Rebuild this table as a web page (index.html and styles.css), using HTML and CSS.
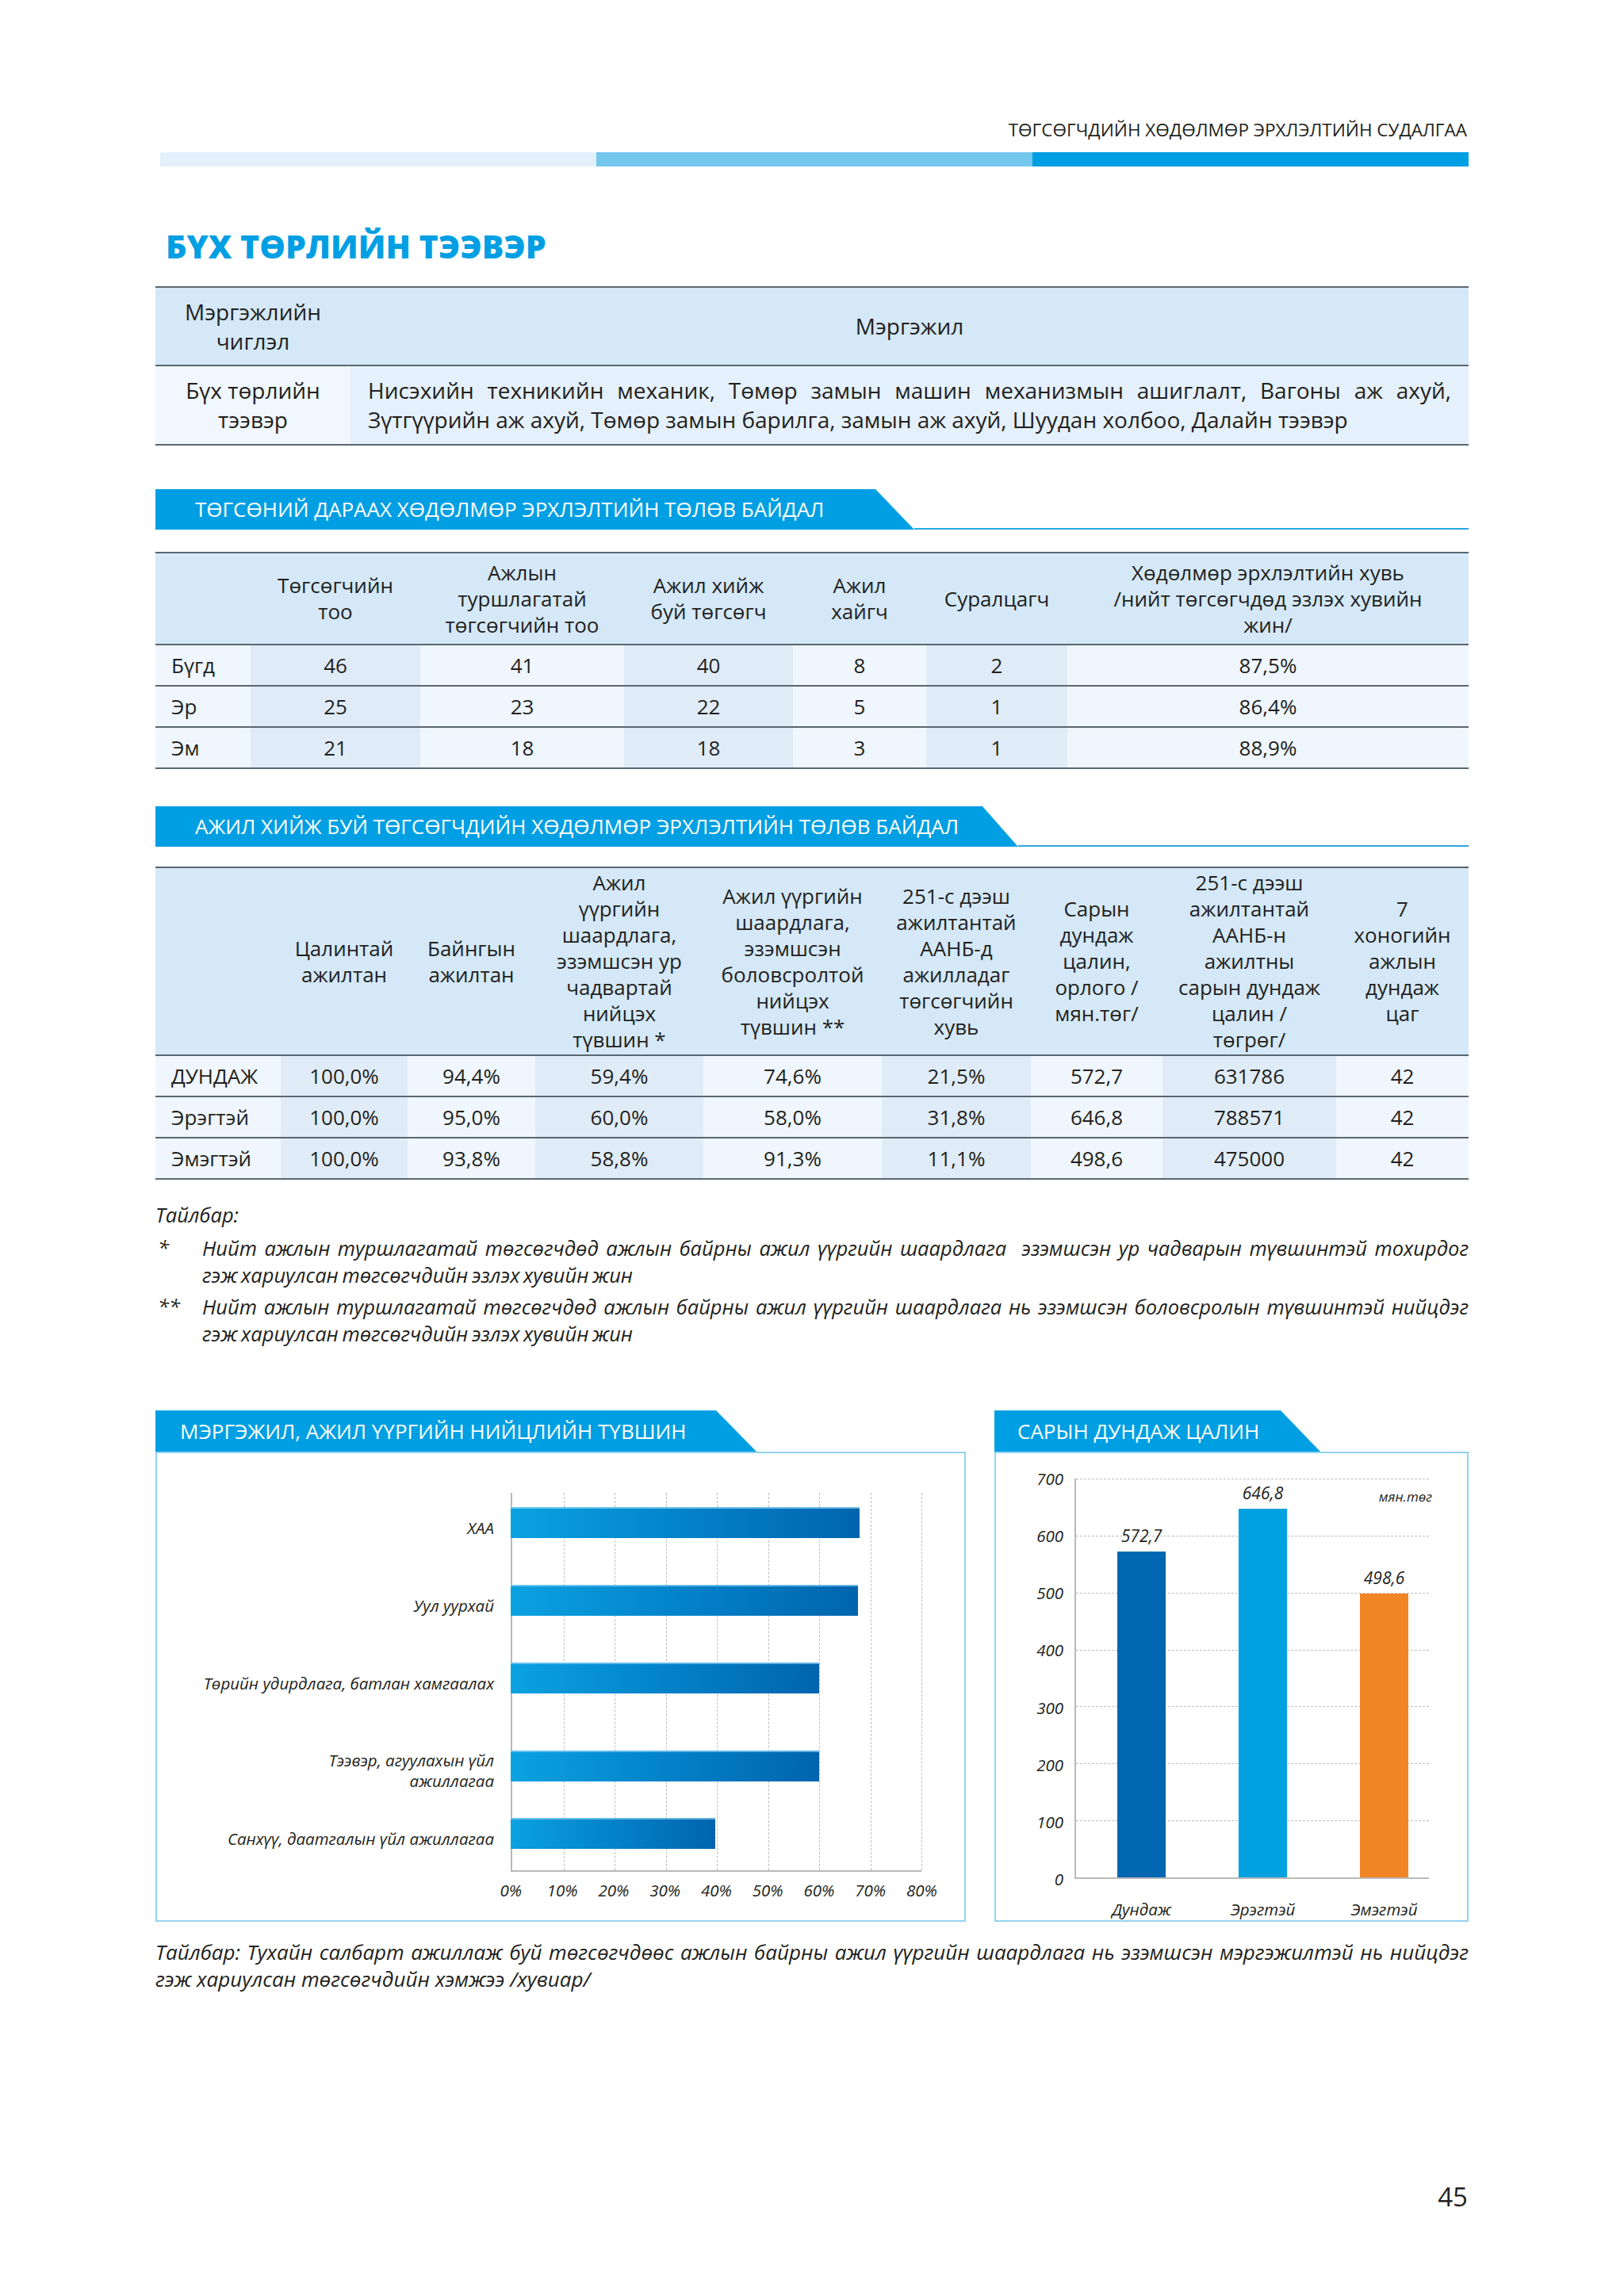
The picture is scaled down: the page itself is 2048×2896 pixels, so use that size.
FILE: index.html
```html
<!DOCTYPE html>
<html lang="mn">
<head>
<meta charset="utf-8">
<title>Бүх төрлийн тээвэр</title>
<link rel="stylesheet" href="styles.css">
</head>
<body>
<div class="page">
  <div class="running-head">ТӨГСӨГЧДИЙН ХӨДӨЛМӨР ЭРХЛЭЛТИЙН СУДАЛГАА</div>
  <div class="stripe"><span class="s1"></span><span class="s2"></span><span class="s3"></span></div>

  <h1 class="title">БҮХ ТӨРЛИЙН ТЭЭВЭР</h1>

  <table class="tbl t1">
    <colgroup><col class="c-first"><col></colgroup>
    <thead>
      <tr><th>Мэргэжлийн<br>чиглэл</th><th>Мэргэжил</th></tr>
    </thead>
    <tbody>
      <tr>
        <td class="lt">Бүх төрлийн<br>тээвэр</td>
        <td class="desc"><span class="jl">Нисэхийн техникийн механик, Төмөр замын машин механизмын ашиглалт, Вагоны аж ахуй,</span><span class="ln">Зүтгүүрийн аж ахуй, Төмөр замын барилга, замын аж ахуй, Шуудан холбоо, Далайн тээвэр</span></td>
      </tr>
    </tbody>
  </table>

  <div class="sec-head sec-a">
    <div class="sec-tab">ТӨГСӨНИЙ ДАРААХ ХӨДӨЛМӨР ЭРХЛЭЛТИЙН ТӨЛӨВ БАЙДАЛ</div>
    <div class="sec-line"></div>
  </div>

  <table class="tbl t2">
    <colgroup>
      <col class="w120"><col class="w214"><col class="w257"><col class="w213"><col class="w168"><col class="w178"><col>
    </colgroup>
    <thead>
      <tr>
        <th></th>
        <th>Төгсөгчийн<br>тоо</th>
        <th>Ажлын<br>туршлагатай<br>төгсөгчийн тоо</th>
        <th>Ажил хийж<br>буй төгсөгч</th>
        <th>Ажил<br>хайгч</th>
        <th>Суралцагч</th>
        <th>Хөдөлмөр эрхлэлтийн хувь<br>/нийт төгсөгчдөд эзлэх хувийн<br>жин/</th>
      </tr>
    </thead>
    <tbody>
      <tr><td class="rl">Бүгд</td><td>46</td><td>41</td><td>40</td><td>8</td><td>2</td><td>87,5%</td></tr>
      <tr><td class="rl">Эр</td><td>25</td><td>23</td><td>22</td><td>5</td><td>1</td><td>86,4%</td></tr>
      <tr><td class="rl">Эм</td><td>21</td><td>18</td><td>18</td><td>3</td><td>1</td><td>88,9%</td></tr>
    </tbody>
  </table>

  <div class="sec-head sec-b">
    <div class="sec-tab">АЖИЛ ХИЙЖ БУЙ ТӨГСӨГЧДИЙН ХӨДӨЛМӨР ЭРХЛЭЛТИЙН ТӨЛӨВ БАЙДАЛ</div>
    <div class="sec-line"></div>
  </div>

  <table class="tbl t3">
    <colgroup>
      <col class="w158"><col class="w160"><col class="w161"><col class="w212"><col class="w225"><col class="w188"><col class="w166"><col class="w219"><col>
    </colgroup>
    <thead>
      <tr>
        <th></th>
        <th>Цалинтай<br>ажилтан</th>
        <th>Байнгын<br>ажилтан</th>
        <th>Ажил<br>үүргийн<br>шаардлага,<br>эзэмшсэн ур<br>чадвартай<br>нийцэх<br>түвшин *</th>
        <th>Ажил үүргийн<br>шаардлага,<br>эзэмшсэн<br>боловсролтой<br>нийцэх<br>түвшин **</th>
        <th>251-с дээш<br>ажилтантай<br>ААНБ-д<br>ажилладаг<br>төгсөгчийн<br>хувь</th>
        <th>Сарын<br>дундаж<br>цалин,<br>орлого /<br>мян.төг/</th>
        <th>251-с дээш<br>ажилтантай<br>ААНБ-н<br>ажилтны<br>сарын дундаж<br>цалин /<br>төгрөг/</th>
        <th>7<br>хоногийн<br>ажлын<br>дундаж<br>цаг</th>
      </tr>
    </thead>
    <tbody>
      <tr><td class="rl">ДУНДАЖ</td><td>100,0%</td><td>94,4%</td><td>59,4%</td><td>74,6%</td><td>21,5%</td><td>572,7</td><td>631786</td><td>42</td></tr>
      <tr><td class="rl">Эрэгтэй</td><td>100,0%</td><td>95,0%</td><td>60,0%</td><td>58,0%</td><td>31,8%</td><td>646,8</td><td>788571</td><td>42</td></tr>
      <tr><td class="rl">Эмэгтэй</td><td>100,0%</td><td>93,8%</td><td>58,8%</td><td>91,3%</td><td>11,1%</td><td>498,6</td><td>475000</td><td>42</td></tr>
    </tbody>
  </table>

  <div class="notes">
    <div class="notes-title">Тайлбар:</div>
    <div class="note-item">
      <span class="mark">*</span>
      <span class="note-text"><span class="jl">Нийт ажлын туршлагатай төгсөгчдөд ажлын байрны ажил үүргийн шаардлага&nbsp; эзэмшсэн ур чадварын түвшинтэй тохирдог</span><span class="ln">гэж хариулсан төгсөгчдийн эзлэх хувийн жин</span></span>
    </div>
    <div class="note-item">
      <span class="mark">**</span>
      <span class="note-text"><span class="jl">Нийт ажлын туршлагатай төгсөгчдөд ажлын байрны ажил үүргийн шаардлага нь эзэмшсэн боловсролын түвшинтэй нийцдэг</span><span class="ln">гэж хариулсан төгсөгчдийн эзлэх хувийн жин</span></span>
    </div>
  </div>

  <div class="charts">
    <section class="chart chart-l">
      <div class="chart-tab tab-l">МЭРГЭЖИЛ, АЖИЛ ҮҮРГИЙН НИЙЦЛИЙН ТҮВШИН</div>
      <div class="chart-box box-l">
        <div class="hchart">
          <div class="hgrid">
            <span class="vline" style="left:12.5%"></span>
            <span class="vline" style="left:25%"></span>
            <span class="vline" style="left:37.5%"></span>
            <span class="vline" style="left:50%"></span>
            <span class="vline" style="left:62.5%"></span>
            <span class="vline" style="left:75%"></span>
            <span class="vline" style="left:87.5%"></span>
            <span class="vline" style="left:100%"></span>
          </div>
          <div class="hrow"><div class="hlabel">ХАА</div><div class="htrack"><div class="hbar" style="width:84.9%"></div></div></div>
          <div class="hrow"><div class="hlabel">Уул уурхай</div><div class="htrack"><div class="hbar" style="width:84.6%"></div></div></div>
          <div class="hrow"><div class="hlabel">Төрийн удирдлага, батлан хамгаалах</div><div class="htrack"><div class="hbar" style="width:75%"></div></div></div>
          <div class="hrow"><div class="hlabel two">Тээвэр, агуулахын үйл<br>ажиллагаа</div><div class="htrack"><div class="hbar" style="width:75%"></div></div></div>
          <div class="hrow"><div class="hlabel">Санхүү, даатгалын үйл ажиллагаа</div><div class="htrack"><div class="hbar" style="width:49.8%"></div></div></div>
        </div>
        <div class="hx">
          <span>0%</span><span>10%</span><span>20%</span><span>30%</span><span>40%</span><span>50%</span><span>60%</span><span>70%</span><span>80%</span>
        </div>
      </div>
    </section>

    <section class="chart chart-r">
      <div class="chart-tab tab-r">САРЫН ДУНДАЖ ЦАЛИН</div>
      <div class="chart-box box-r">
        <div class="vchart">
          <div class="vy">
            <span>700</span><span>600</span><span>500</span><span>400</span><span>300</span><span>200</span><span>100</span><span>0</span>
          </div>
          <div class="vplot">
            <span class="hline" style="top:0%"></span>
            <span class="hline" style="top:14.2857%"></span>
            <span class="hline" style="top:28.5714%"></span>
            <span class="hline" style="top:42.8571%"></span>
            <span class="hline" style="top:57.1429%"></span>
            <span class="hline" style="top:71.4286%"></span>
            <span class="hline" style="top:85.7143%"></span>
            <span class="unit">мян.төг</span>
            <div class="vbars">
              <div class="vcol"><span class="vval">572,7</span><div class="vbar b-avg" style="height:81.81%"></div></div>
              <div class="vcol"><span class="vval">646,8</span><div class="vbar b-m" style="height:92.4%"></div></div>
              <div class="vcol"><span class="vval">498,6</span><div class="vbar b-f" style="height:71.23%"></div></div>
            </div>
          </div>
          <div></div>
          <div class="vx">
            <div class="vxi"><span>Дундаж</span></div>
            <div class="vxi"><span>Эрэгтэй</span></div>
            <div class="vxi"><span>Эмэгтэй</span></div>
          </div>
        </div>
      </div>
    </section>
  </div>

  <p class="foot-note"><span class="jl">Тайлбар: Тухайн салбарт ажиллаж буй төгсөгчдөөс ажлын байрны ажил үүргийн шаардлага нь эзэмшсэн мэргэжилтэй нь нийцдэг</span><span class="ln">гэж хариулсан төгсөгчдийн хэмжээ /хувиар/</span></p>

  <div class="page-num">45</div>
</div>
</body>
</html>
```

FILE: styles.css
```css
* { box-sizing: border-box; }
html, body { margin: 0; padding: 0; background: #ffffff; }
body {
  font-family: "Open Sans", "Noto Sans", "DejaVu Sans", sans-serif;
  color: #231f20;
}
.page {
  width: 2048px;
  height: 2896px;
  padding: 150px 196px 0 196px;
}

/* running head */
.running-head {
  text-align: right;
  font-size: 22.5px;
  line-height: 28px;
  padding-right: 2px;
}
.stripe {
  display: flex;
  height: 18px;
  margin: 14px 0 0 6px;
}
.stripe span { flex: 1; }
.s1 { background: #e3f0fb; }
.s2 { background: #74c7ec; }
.s3 { background: #009fe3; }

.title {
  margin: 76px 0 0 13px;
  font-size: 41px;
  font-weight: 800;
  line-height: 48px;
  color: #009fe3;
  letter-spacing: 0;
}

/* tables */
.tbl {
  width: 100%;
  border-collapse: collapse;
  table-layout: fixed;
  font-size: 26px;
  line-height: 33px;
}
.tbl th, .tbl td {
  border-top: 2px solid #5b6770;
  border-bottom: 2px solid #5b6770;
  padding: 0;
  text-align: center;
  vertical-align: middle;
  font-weight: 400;
}
.tbl thead th { background: #d4e8f8; }

.t1 { margin-top: 27px; font-size: 28px; line-height: 37px; }
.t1 .c-first { width: 246px; }
.t1 thead th { height: 99px; }
.t1 tbody td { height: 100px; background: #e4f0fb; }
.t1 tbody td.lt { background: #f0f7fe; }
.t1 .desc { text-align: left; padding: 0 22px; }
.jl { display: block; text-align: justify; text-align-last: justify; }
.ln { display: block; }

.t2 { margin-top: 28px; }
.t2 thead th { height: 116px; }
.t2 tbody td { height: 52px; background: #eff6fd; }
.t2 tbody td:nth-child(even) { background: #dfecf8; }

.t3 { margin-top: 25px; }
.t3 thead th { height: 237px; }
.t3 tbody td { height: 52px; background: #eff6fd; }
.t3 tbody td:nth-child(even) { background: #dfecf8; }

.tbl td.rl { text-align: left; padding-left: 20px; }

.w120 { width: 120px; } .w214 { width: 214px; } .w257 { width: 257px; } .w213 { width: 213px; }
.w168 { width: 168px; } .w178 { width: 178px; }
.w158 { width: 158px; } .w160 { width: 160px; } .w161 { width: 161px; } .w212 { width: 212px; }
.w225 { width: 225px; } .w188 { width: 188px; } .w166 { width: 166px; } .w219 { width: 219px; }

/* section heads */
.sec-head {
  display: flex;
  align-items: flex-end;
  height: 51px;
}
.sec-a { margin-top: 55px; }
.sec-b { margin-top: 47px; }
.sec-tab {
  height: 51px;
  background: #009fe3;
  color: #ffffff;
  font-size: 26px;
  line-height: 51px;
  padding-left: 50px;
  white-space: nowrap;
  flex: none;
}
.sec-a .sec-tab { width: 957px; clip-path: polygon(0 0, calc(100% - 49px) 0, 100% 100%, 0 100%); }
.sec-b .sec-tab { width: 1088px; clip-path: polygon(0 0, calc(100% - 45px) 0, 100% 100%, 0 100%); }
.sec-line { flex: 1; height: 2px; background: #29a8e0; }

/* notes */
.notes {
  margin-top: 27px;
  font-style: italic;
  font-size: 25.5px;
  line-height: 34px;
  word-spacing: -2px;
}
.note-item {
  display: grid;
  grid-template-columns: 59px 1fr;
  margin-top: 6px;
}
.notes-title + .note-item { margin-top: 8px; }
.mark { padding-left: 3px; }

/* charts */
.charts {
  display: flex;
  gap: 36px;
  margin-top: 80px;
}
.chart-l { width: 1022px; }
.chart-r { width: 598px; }
.chart-tab {
  height: 52px;
  background: #009fe3;
  color: #ffffff;
  font-size: 26px;
  line-height: 52px;
  white-space: nowrap;
}
.tab-l { width: 758px; padding-left: 31px; clip-path: polygon(0 0, calc(100% - 51px) 0, 100% 100%, 0 100%); }
.tab-r { width: 411px; padding-left: 29px; clip-path: polygon(0 0, calc(100% - 50px) 0, 100% 100%, 0 100%); }
.chart-box {
  border: 2px solid #93d3ef;
  height: 593px;
  background: #ffffff;
}

/* horizontal bar chart */
.box-l { padding: 50px 0 0 0; }
.hchart {
  position: relative;
  height: 478px;
  display: flex;
  flex-direction: column;
  gap: 59px;
  padding-top: 18px;
}
.hgrid {
  position: absolute;
  left: 446px;
  top: 0;
  width: 518px;
  height: 478px;
  border-left: 2px solid #b9b9b9;
  border-bottom: 2px solid #b9b9b9;
}
.vline {
  position: absolute;
  top: 0;
  bottom: 0;
  border-left: 1px dashed #bdbdbd;
}
.hrow {
  position: relative;
  display: grid;
  grid-template-columns: 425px 518px;
  column-gap: 21px;
  height: 39px;
  align-items: center;
}
.hlabel {
  text-align: right;
  font-style: italic;
  font-size: 20.5px;
  line-height: 26px;
  white-space: nowrap;
  padding-top: 12px;
}
.htrack { height: 39px; }
.hbar {
  height: 39px;
  background: linear-gradient(to right, #0ba2e1 0%, #0385cc 45%, #0064ae 100%);
  box-shadow: inset 0 2px 0 rgba(140, 210, 245, 0.7);
}
.hx {
  display: grid;
  grid-template-columns: repeat(9, 64.75px);
  margin: 11px 0 0 414px;
  font-style: italic;
  font-size: 20.5px;
  line-height: 24px;
}
.hx span { text-align: center; }

/* vertical bar chart */
.box-r { padding: 32px 0 0 0; }
.vchart {
  display: grid;
  grid-template-columns: 85px 447px;
  column-gap: 14px;
}
.vy {
  height: 529px;
  margin-top: -12px;
  display: flex;
  flex-direction: column;
  justify-content: space-between;
  align-items: flex-end;
  font-style: italic;
  font-size: 20.5px;
  line-height: 24px;
}
.vplot {
  position: relative;
  height: 505px;
  border-left: 2px solid #b9b9b9;
  border-bottom: 2px solid #b9b9b9;
}
.hline {
  position: absolute;
  left: 0;
  right: 0;
  border-top: 1px dashed #bdbdbd;
}
.unit {
  position: absolute;
  right: -4px;
  top: 11px;
  font-style: italic;
  font-size: 17px;
  line-height: 24px;
}
.vbars {
  position: absolute;
  left: 52px;
  right: 0;
  top: 0;
  bottom: 0;
  display: flex;
  gap: 92px;
  align-items: flex-end;
}
.vcol {
  width: 61px;
  height: 100%;
  display: flex;
  flex-direction: column;
  justify-content: flex-end;
  align-items: center;
}
.vval {
  font-style: italic;
  font-size: 21px;
  line-height: 24px;
  margin-bottom: 8px;
  white-space: nowrap;
}
.vbar { width: 61px; flex: none; }
.b-avg { background: #0067b2; }
.b-m { background: #00a1e0; }
.b-f { background: #f18526; }
.vx {
  display: flex;
  gap: 92px;
  padding-left: 54px;
  margin-top: 14px;
}
.vxi {
  width: 61px;
  display: flex;
  justify-content: center;
  font-style: italic;
  font-size: 20.5px;
  line-height: 24px;
  white-space: nowrap;
}

/* footer */
.foot-note {
  margin: 21px 0 0 0;
  font-style: italic;
  font-size: 26px;
  line-height: 34px;
}
.page-num {
  margin-top: 238px;
  text-align: right;
  font-size: 33px;
  line-height: 40px;
  padding-right: 1px;
}
```
